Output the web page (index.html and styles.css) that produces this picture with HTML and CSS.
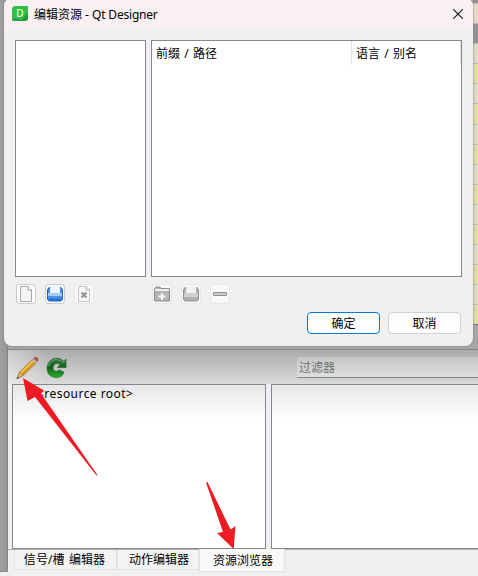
FILE: index.html
```html
<!DOCTYPE html>
<html lang="zh-CN">
<head>
<meta charset="utf-8">
<title>编辑资源 - Qt Designer</title>
<link rel="stylesheet" href="styles.css">
</head>
<body>
<div class="app">
  <div class="edge"></div>
  <main class="dock">
    <div class="behind"><div class="rows"><i class="dark r0"></i><i class="peach"></i><i class="dark"></i><i class="pale"></i><i></i><i class="pale"></i><i></i><i class="pale"></i><i></i><i class="pale"></i><i></i><i class="pale"></i><i></i><i class="pale"></i><i></i><i class="pale"></i><i></i></div></div>
    <div class="toolbar">
      <svg class="pencil" width="24" height="24" viewBox="0 0 24 24">
        <path d="M1 23L3.500 16.500L18 2L21.500 5.500L7.500 19.500Z" fill="#d99a22" stroke="#8b6421" stroke-width=".7"/>
        <path d="M5 17L18 4" stroke="#f3c552" stroke-width="1.600"/>
        <path d="M1 23L3.500 16.500L7.500 19.500Z" fill="#e0bd7c" stroke="#8b6a35" stroke-width=".6"/>
        <path d="M1 23L1.800 21L3 22Z" fill="#333"/>
        <path d="M16 4L18 2L21.500 5.500L19.500 7.500Z" fill="#b9b4a4"/>
        <path d="M18 2Q20 0 22 1.500Q24 3.500 21.500 5.500Z" fill="#a9523b"/>
      </svg>
      <svg class="reload" width="22" height="22" viewBox="0 0 22 22">
        <defs><linearGradient id="g" x1="0" y1="0" x2="0" y2="1"><stop offset="0" stop-color="#2c7638"/><stop offset=".5" stop-color="#14601c"/><stop offset="1" stop-color="#28b526"/></linearGradient></defs>
        <path d="M20.500 2V10.500H11.500L14.500 7.500Q11.500 5 8.500 7.500Q6.500 10 7.500 13Q10 16 14 13L18.500 15.500Q16 21 10.500 21Q1 20 1 11Q2 2 10 1Q14.500 .5 18 4Z" fill="url(#g)" stroke="#145c1b" stroke-width=".6"/>
        <path d="M2.500 9Q5 2 11 2.500Q15 2.500 17.500 5.500L19.500 4" fill="none" stroke="#79a97d" stroke-width="1"/>
      </svg>
      <div class="filter">过滤器</div>
    </div>
    <div class="split">
      <div class="pane tree">&lt;resource root&gt;</div>
      <div class="pane files"></div>
    </div>
    <nav class="tabs">
      <span class="tab t1">信号/槽 编辑器</span><span class="tab t2">动作编辑器</span><span class="tab active">资源浏览器</span>
    </nav>
  </main>
</div>
<section class="dialog">
  <header class="title">
    <svg width="16" height="15" viewBox="0 0 16 15"><path d="M2 0H16V13L14 15H0V2Z" fill="#36bd4b"/><path d="M0 12L3 15H14L16 13V7L9 14Z" fill="#209b38"/><text x="8" y="11" text-anchor="middle" class="logo">D</text></svg>
    <span>编辑资源 - <b>Qt Designer</b></span>
    <svg class="close" width="10" height="10" viewBox="0 0 10 10"><path d="M.3.300L9.700 9.700M9.700.300L.3 9.700" stroke="#111" stroke-width="1.100"/></svg>
  </header>
  <div class="boxes">
    <div class="box"></div>
    <div class="box table"><div class="head c1">前缀 / 路径</div><div class="head c2">语言 / 别名</div></div>
  </div>
  <div class="tools">
    <span class="tool"><svg width="18" height="18" viewBox="0 0 18 18"><path d="M3.500 1.500H11L14.500 5V16.500H3.500Z" fill="#f4f4f4" stroke="#a8a8a8"/><path d="M11 1.500V5H14.500" fill="#fff" stroke="#999"/></svg></span>
    <span class="tool"><svg width="18" height="18" viewBox="0 0 18 18"><path d="M3 2.500H15L16.500 5V14.500L15 16H3L1.500 14.500V5Z" fill="#4b8fe2" stroke="#1d5fb4"/><path d="M4 1H14V8H4Z" fill="#eef7ff"/><path d="M2 8H16V11H2Z" fill="#a5cdfa"/><path d="M3 14.500H15" stroke="#1b6bd0" stroke-width="1.500"/></svg></span>
    <span class="tool off"><svg width="18" height="18" viewBox="0 0 18 18"><path d="M3.500 1.500H11L14.500 5V16.500H3.500Z" fill="#f6f6f6" stroke="#c4c4c4"/><path d="M11 1.500V5H14.500" fill="none" stroke="#b5b5b5"/><path d="M6.500 7.500L11.500 12.500M11.500 7.500L6.500 12.500" stroke="#8f8f8f" stroke-width="2"/></svg></span>
    <span class="tool off add"><svg width="18" height="18" viewBox="0 0 18 18"><path d="M1.500 16V3.500L3 2H7L8 3.500H16.500V16Z" fill="#b4b4b4" stroke="#8c8c8c"/><path d="M2 5H16" stroke="#eee" stroke-width="2"/><path d="M9 8V15M5.500 11.500H12.500" stroke="#f5f5f5" stroke-width="2"/></svg></span>
    <span class="tool off"><svg width="18" height="18" viewBox="0 0 18 18"><path d="M3 2.500H15L16.500 5V14.500L15 16H3L1.500 14.500V5Z" fill="#b0b0b0" stroke="#919191"/><path d="M4 1H14V8H4Z" fill="#f2f2f2"/><path d="M2 8H16V12H2Z" fill="#d0d0d0"/></svg></span>
    <span class="tool off"><svg width="18" height="18" viewBox="0 0 18 18"><path d="M2.500 7.500H15.500V10.500H2.500Z" fill="#ccc" stroke="#909090"/></svg></span>
  </div>
  <div class="actions"><button class="ok">确定</button><button>取消</button></div>
</section>
<svg class="arrows" width="478" height="576" viewBox="0 0 478 576"><path d="M23 378L44 390.500L41 393.500L97.500 475L96.500 475.500L35 397L27.500 401Z" fill="#ed1c24"/><path d="M206 482.500L207.500 482L230.500 529.500L235.500 526L233.700 549L217 533L223 532Z" fill="#ed1c24"/></svg>
</body>
</html>
```
FILE: styles.css
```css
* { box-sizing: border-box; }
body { margin: 0; width: 478px; height: 576px; overflow: hidden; background: #f0f0f0; color: #000; font: 12px "Noto Sans", "Noto Sans CJK SC", sans-serif; }
.app { display: flex; height: 576px; }
.edge { width: 8px; height: 572px; background: linear-gradient(90deg, transparent, #0001), #a0a0a0; border-right: 1px solid #85858d; border-bottom: 1px solid #85858d; }
.dock { flex: 1; min-width: 0; display: flex; flex-direction: column; background: #f0f0f0; }
.behind { height: 350px; flex: none; display: flex; justify-content: flex-end; background: #a6a6a6; border-bottom: 1px solid #858585; }
.rows { width: 5px; height: 325px; overflow: hidden; border-bottom: 1px solid #777781; }
.rows i { display: block; height: 20.100px; background: #e0dd9f; border-bottom: 1px solid #b8b8b8; }
.rows .dark { background: #929292; }
.rows .r0 { height: 4px; }
.rows .peach { background: #e7d8c7; }
.rows .pale { background: #dadbc2; }
.toolbar { height: 34px; flex: none; display: flex; align-items: flex-start; padding: 6px 0 0 8px; background: linear-gradient(90deg, #fff6, transparent 40px), linear-gradient(#ababab, #dadada); }
.reload { margin: 1px 0 0 7px; }
.filter { margin-left: 229px; margin-top: 1px; width: 181px; height: 21px; flex: none; border-bottom: 1px solid #85858a; background: linear-gradient(#c6c6c6, #dedede); color: #717171; line-height: 21px; padding-left: 2px; }
.split { display: flex; height: 165px; flex: none; gap: 5px; padding-left: 4px; }
.pane { border: 1px solid #828790; background: linear-gradient(#e7e7e7, #fff 35px); }
.tree { width: 254px; padding: 1px 0 0 24px; line-height: 16px; letter-spacing: .45px; }
.files { flex: 1; border-right: 0; }
.tabs { display: flex; height: 23px; padding-left: 6px; border-top: 1px solid #b0b0b0; }
.tab { height: 20px; width: 103px; border: 1px solid #e2e2e2; border-top: 0; background: #f3f3f3; text-align: center; line-height: 20px; white-space: nowrap; }
.t1 { word-spacing: 1px; letter-spacing: .1px; padding-right: 2px; }
.t2 { width: 82px; padding-left: 2px; }
.active { width: 86px; height: 23px; margin-top: -1px; padding-left: 2px; background: #f9f9f9; line-height: 23px; }
.dialog { position: absolute; left: 4px; top: -2px; width: 469px; height: 348px; background: #f0f0f0; border-radius: 8px; overflow: hidden; box-shadow: 0 0 1px 1px #8888; }
.title { height: 31px; display: flex; align-items: center; padding: 0 10px 0 8px; background: #f9f0f1; }
.title span { margin-left: 6px; }
.title b { font-weight: 400; letter-spacing: -.2px; }
.close { margin-left: auto; }
.logo { font: 10px "Noto Sans", sans-serif; fill: #fff; }
.boxes { display: flex; gap: 5px; padding: 11px 11px 0; }
.box { width: 131px; height: 237px; background: #fff; border: 1px solid #828790; }
.table { width: 311px; display: flex; }
.head { height: 24px; line-height: 26px; padding-left: 4px; border-right: 1px solid #e3e3e3; word-spacing: 1.200px; }
.c1 { width: 200px; }
.c2 { flex: 1; }
.tools { display: flex; gap: 9px; padding: 7px 12px 0; }
.tool { width: 20px; height: 20px; border: 1px solid #ccc; border-radius: 3px; background: #fcfcfc; display: flex; align-items: center; justify-content: center; }
.off { border-color: #e8e8e8; background: #f8f8f8; }
.add { margin-left: 49px; }
.actions { display: flex; justify-content: flex-end; gap: 8px; padding: 8px 12px 0; }
.actions button { width: 73px; height: 22px; padding: 1px 0 0; border: 1px solid #d0d0d0; border-radius: 4px; background: #fdfdfd; font: inherit; color: #000; line-height: 20px; }
.actions .ok { border-color: #0078d4; }
.arrows { position: absolute; left: 0; top: 0; }
```
